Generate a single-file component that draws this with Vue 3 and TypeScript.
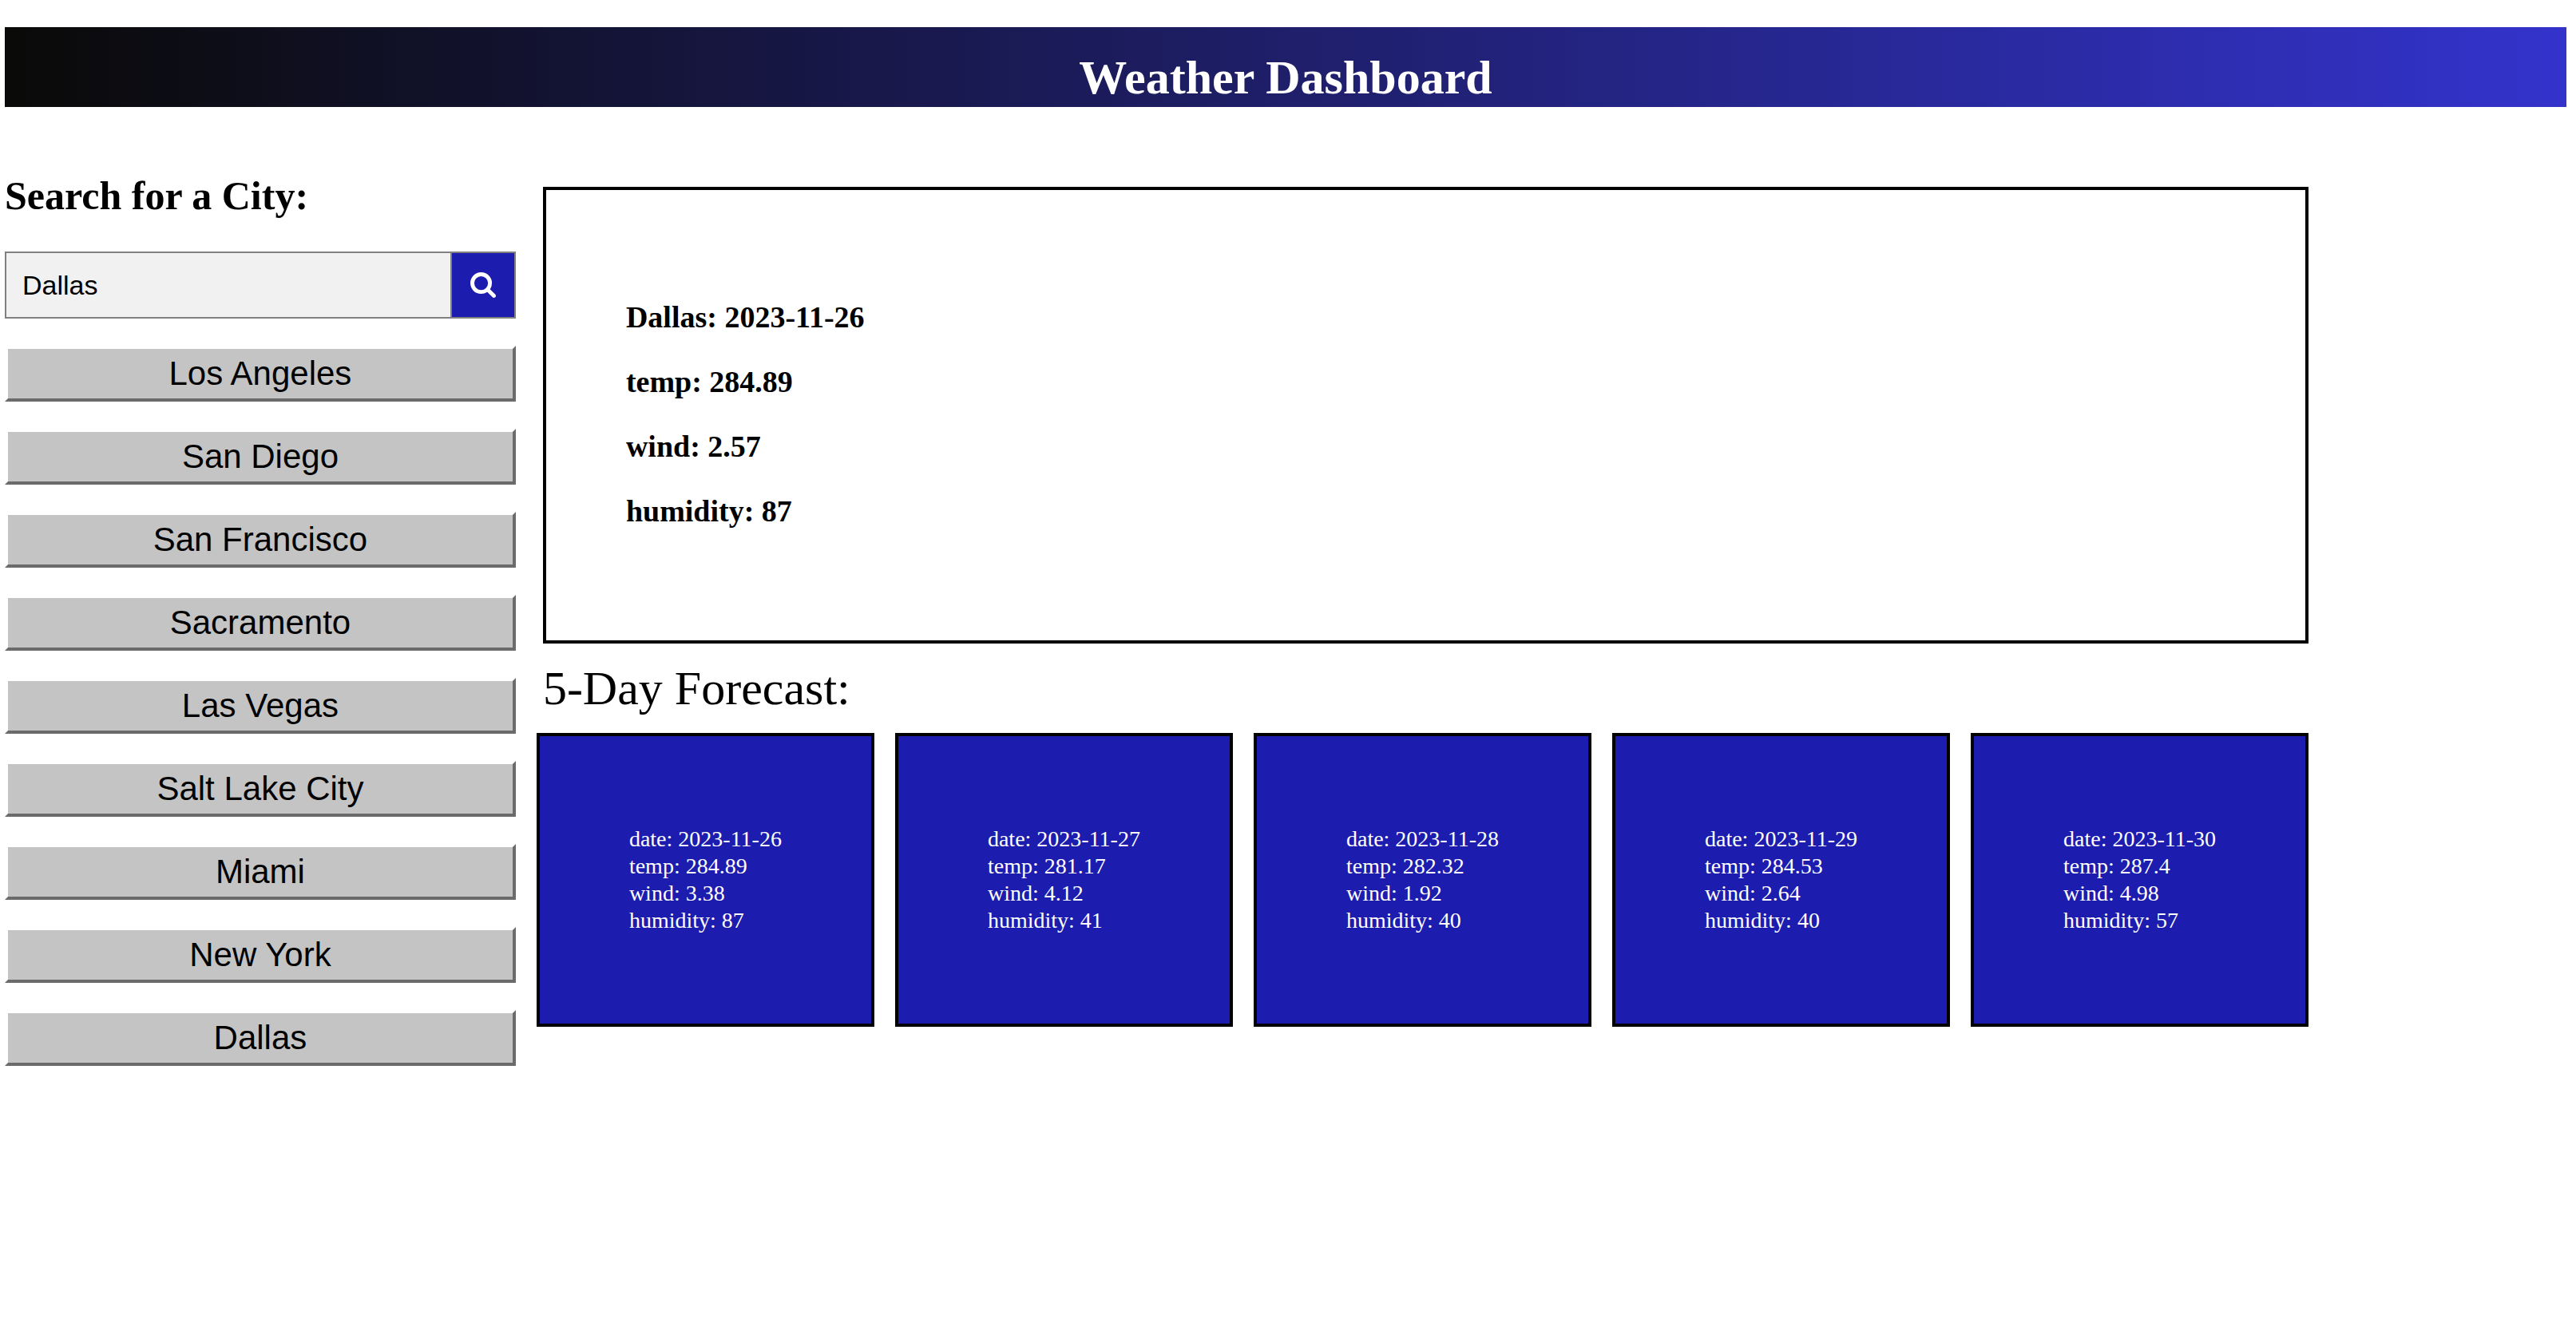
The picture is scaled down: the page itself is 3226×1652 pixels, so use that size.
<script setup lang="ts">
import { ref } from 'vue'

interface Reading {
  date: string
  temp: number
  wind: number
  humidity: number
}

const query = ref('Dallas')

const cities: string[] = [
  'Los Angeles',
  'San Diego',
  'San Francisco',
  'Sacramento',
  'Las Vegas',
  'Salt Lake City',
  'Miami',
  'New York',
  'Dallas',
]

const current: Reading & { city: string } = {
  city: 'Dallas',
  date: '2023-11-26',
  temp: 284.89,
  wind: 2.57,
  humidity: 87,
}

const forecast: Reading[] = [
  { date: '2023-11-26', temp: 284.89, wind: 3.38, humidity: 87 },
  { date: '2023-11-27', temp: 281.17, wind: 4.12, humidity: 41 },
  { date: '2023-11-28', temp: 282.32, wind: 1.92, humidity: 40 },
  { date: '2023-11-29', temp: 284.53, wind: 2.64, humidity: 40 },
  { date: '2023-11-30', temp: 287.4, wind: 4.98, humidity: 57 },
]
</script>

<template>
  <div class="page">
    <header class="banner">
      <h1>Weather Dashboard</h1>
    </header>

    <div class="layout">
      <aside class="sidebar">
        <h2><label for="city-search">Search for a City:</label></h2>
        <form class="search" @submit.prevent>
          <input id="city-search" v-model="query" type="text" name="search" />
          <button type="submit" aria-label="Search">
            <svg viewBox="0 128 1664 1664" aria-hidden="true">
              <path
                d="M1152 832q0-185-131.5-316.5T704 384 387.5 515.5 256 832t131.5 316.5T704 1280t316.5-131.5T1152 832zm512 832q0 52-38 90t-90 38q-54 0-90-38l-343-342q-179 124-399 124-143 0-273.5-55.5t-225-150-150-225T0 832t55.5-273.5 150-225 225-150T704 128t273.5 55.5 225 150 150 225T1408 832q0 220-124 399l343 343q37 37 37 90z"
              />
            </svg>
          </button>
        </form>
        <div class="cities">
          <button v-for="city in cities" :key="city" type="button" @click="query = city">{{ city }}</button>
        </div>
      </aside>

      <main class="weather">
        <section class="current">
          <h3>{{ current.city }}: {{ current.date }}</h3>
          <h3>temp: {{ current.temp }}</h3>
          <h3>wind: {{ current.wind }}</h3>
          <h3>humidity: {{ current.humidity }}</h3>
        </section>

        <p class="forecast-title">5-Day Forecast:</p>

        <section class="forecast">
          <article v-for="day in forecast" :key="day.date" class="card">
            <div>date: {{ day.date }}</div>
            <div>temp: {{ day.temp }}</div>
            <div>wind: {{ day.wind }}</div>
            <div>humidity: {{ day.humidity }}</div>
          </article>
        </section>
      </main>
    </div>
  </div>
</template>

<style>
body {
  margin: 0;
  background: #fff;
}
</style>

<style scoped>
.page {
  padding: 34px 12px 34px 6px;
  color: #000;
  font-family: 'Liberation Serif', 'Times New Roman', serif;
}

.page * {
  box-sizing: border-box;
}

h1,
h2,
h3,
p {
  margin: 0;
}

.banner {
  padding: 28px 0 2px;
  background: linear-gradient(to right, #0a0a08, #3333cc);
  color: #fff;
  text-align: center;
}

h1 {
  font-size: 60px;
  line-height: 70px;
}

.layout {
  display: grid;
  grid-template-columns: 640fr 2219fr 297fr;
  column-gap: 26px;
  align-items: start;
  padding-top: 80px;
}

h2 {
  font-size: 50px;
  line-height: 62px;
}

.search {
  display: flex;
  margin-top: 39px;
}

.search input {
  width: 87.5%;
  height: 84px;
  padding: 0 20px;
  border: 2px solid #808080;
  border-radius: 0;
  outline: none;
  background: #f1f1f1;
  color: #000;
  font-family: 'Liberation Sans', Arial, sans-serif;
  font-size: 34px;
}

.search button {
  width: 12.5%;
  display: flex;
  align-items: center;
  justify-content: center;
  padding: 0;
  border: 2px solid #808080;
  border-left: none;
  background: #1c1cae;
  cursor: pointer;
}

.search svg {
  width: 32px;
  height: 32px;
  fill: #fff;
}

.cities {
  display: flex;
  flex-direction: column;
  gap: 34px;
  margin-top: 34px;
}

.cities button {
  height: 70px;
  padding: 0;
  border: 4px solid;
  border-color: #fff #6b6b6b #6b6b6b #fff;
  background: #c4c4c4;
  color: #000;
  font-family: 'Liberation Sans', Arial, sans-serif;
  font-size: 42px;
  line-height: 60px;
  cursor: pointer;
}

.current {
  display: flex;
  flex-direction: column;
  gap: 37px;
  margin: 20px 0 0 8px;
  padding: 137px 100px 140px;
  border: 4px solid #000;
}

h3 {
  font-size: 38px;
  line-height: 44px;
}

.forecast-title {
  margin-left: 8px;
  padding: 20px 0;
  font-size: 60px;
  line-height: 72px;
}

.forecast {
  display: grid;
  grid-template-columns: repeat(5, 1fr);
  gap: 26px;
}

.card {
  padding: 112px;
  border: 4px solid #000;
  background: #1c1cae;
  color: #fff;
  font-size: 28px;
  line-height: 34px;
  white-space: nowrap;
}
</style>
